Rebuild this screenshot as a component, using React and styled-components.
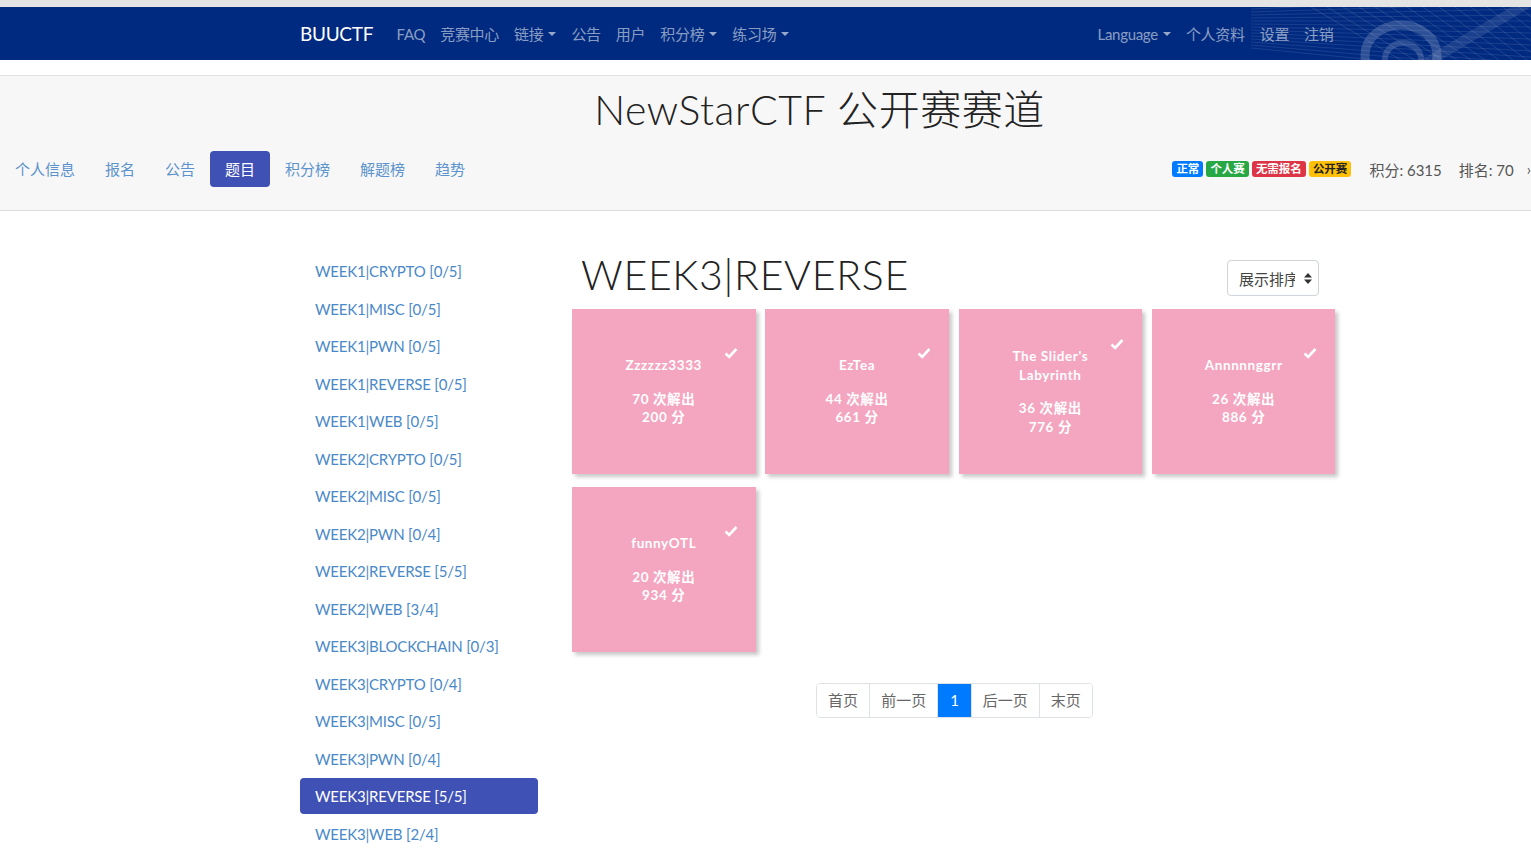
import React from "react";
import styled, { createGlobalStyle } from "styled-components";

const GlobalStyle = createGlobalStyle`
  html, body {
    margin: 0;
    padding: 0;
    background: #fff;
    overflow-x: hidden;
  }
  body {
    font-family: Lato, "Noto Sans CJK SC", sans-serif;
    font-size: 15px;
    color: #333;
  }
  a { text-decoration: none; }
`;

const TopStrip = styled.div`
  height: 7px;
  background: #e4e4e4;
`;

const NavBar = styled.nav`
  position: relative;
  height: 53px;
  background: #002a80;
  display: flex;
  align-items: center;
  padding: 0 190px 0 300px;
  overflow: hidden;
`;

const Pattern = styled.svg`
  position: absolute;
  right: 0;
  top: 0;
  width: 280px;
  height: 53px;
`;

const Brand = styled.a`
  color: #fff;
  font-size: 19px;
  letter-spacing: -0.3px;
  margin-right: 16px;
  position: relative;
`;

const NavGroup = styled.div`
  display: flex;
  align-items: center;
  position: relative;
  margin-left: ${(p) => (p.$right ? "auto" : "0")};
`;

const NavItem = styled.a`
  color: rgba(255, 255, 255, 0.55);
  font-size: 15px;
  padding: 0 7.5px;
  display: flex;
  align-items: center;
  letter-spacing: -0.3px;
  &::after {
    content: ${(p) => (p.$caret ? '""' : "none")};
    display: inline-block;
    margin-left: 5px;
    border-top: 4.5px solid rgba(255, 255, 255, 0.6);
    border-left: 4px solid transparent;
    border-right: 4px solid transparent;
  }
`;

const Gap = styled.div`
  height: 15px;
  background: #fff;
`;

const Header = styled.header`
  background: #f7f7f7;
  border-top: 1px solid #e2e2e2;
  border-bottom: 1px solid #dcdcdc;
  padding: 10px 0 23px;
  overflow: hidden;
`;

const Title = styled.h1`
  margin: 0;
  padding-left: 108px;
  text-align: center;
  font-family: Lato, "Noto Sans CJK SC", sans-serif;
  font-weight: 300;
  font-size: 41px;
  line-height: 48px;
  letter-spacing: 0.55px;
  color: #222;
`;

const SubRow = styled.div`
  display: flex;
  align-items: center;
  justify-content: space-between;
  margin-top: 17px;
  width: 1531px;
`;

const Pills = styled.div`
  display: flex;
`;

const Pill = styled.a`
  display: block;
  height: 36px;
  line-height: 36px;
  padding: 0 15px;
  border-radius: 4px;
  font-size: 15px;
  color: ${(p) => (p.$active ? "#fff" : "#5b93cc")};
  background: ${(p) => (p.$active ? "#3f51b5" : "transparent")};
`;

const Stats = styled.div`
  display: flex;
  align-items: center;
`;

const Badge = styled.span`
  display: inline-block;
  font-size: 11.5px;
  font-weight: 700;
  line-height: 16px;
  padding: 0 4px;
  border-radius: 3px;
  margin-right: 3px;
  color: ${(p) => (p.$dark ? "#222" : "#fff")};
  background: ${(p) => p.$bg};
`;

const Stat = styled.span`
  margin-left: ${(p) => p.$ml || "17px"};
  font-size: 15px;
  color: #555;
`;

const Main = styled.main`
  display: flex;
  align-items: flex-start;
  padding: 42px 0 0 300px;
`;

const Sidebar = styled.div`
  width: 238px;
  display: flex;
  flex-direction: column;
`;

const SideLink = styled.a`
  display: block;
  height: 37.5px;
  line-height: 37.5px;
  padding: 0 15px;
  border-radius: 4px;
  font-size: 15px;
  letter-spacing: -0.2px;
  color: ${(p) => (p.$active ? "#fff" : "#4a89c8")};
  background: ${(p) => (p.$active ? "#3f51b5" : "transparent")};
  ${(p) => p.$active && "height: 36px; line-height: 36px; margin: 0 0 1.5px;"}
`;

const Content = styled.section`
  margin-left: 34px;
  width: 765px;
  margin-top: -2px;
`;

const ContentHead = styled.div`
  display: flex;
  align-items: flex-start;
  justify-content: space-between;
  padding: 0 18px 0 9px;
  height: 58px;
`;

const CatTitle = styled.h2`
  margin: 0;
  font-family: Lato, sans-serif;
  font-weight: 300;
  font-size: 41px;
  line-height: 48px;
  letter-spacing: 0.7px;
  color: #222;
`;

const SortBox = styled.div`
  margin-top: 9px;
  width: 92px;
  height: 36px;
  box-sizing: border-box;
  border: 1px solid #ced4da;
  border-radius: 4px;
  display: flex;
  align-items: center;
  padding: 0 6px 0 11px;
  font-size: 15px;
  color: #444;
  white-space: nowrap;
  overflow: hidden;
  background: #fff;
`;

const SortText = styled.span`
  width: 56px;
  overflow: hidden;
`;

const Arrows = styled.svg`
  margin-left: auto;
  width: 8px;
  height: 11px;
`;

const Grid = styled.div`
  display: grid;
  grid-template-columns: repeat(4, 183.5px);
  column-gap: 9.8px;
  row-gap: 13px;
`;

const Card = styled.div`
  height: 165px;
  background: #f4a5c0;
  box-shadow: 3px 3px 4px rgba(0, 0, 0, 0.22);
  display: flex;
  align-items: center;
  justify-content: center;
`;

const CardBody = styled.div`
  position: relative;
  width: 100%;
  text-align: center;
  color: #fff;
  font-weight: 700;
  font-size: 13.5px;
  line-height: 18.5px;
  letter-spacing: 0.6px;
`;

const Name = styled.div`
  padding: 0 40px;
  margin-bottom: 15px;
`;

const Check = styled.svg`
  position: absolute;
  right: 18px;
  top: -9px;
  width: 14px;
  height: 12px;
`;

const Pager = styled.div`
  display: flex;
  justify-content: center;
  margin-top: 31px;
`;

const PageList = styled.div`
  display: flex;
  border: 1px solid #dee2e6;
  border-radius: 4px;
  overflow: hidden;
`;

const PageItem = styled.a`
  display: block;
  height: 33px;
  line-height: 33px;
  padding: 0 ${(p) => (p.$active ? "12px" : "11px")};
  font-size: 15px;
  color: ${(p) => (p.$active ? "#fff" : "#666")};
  background: ${(p) => (p.$active ? "#007bff" : "#fff")};
  border-left: ${(p) => (p.$first ? "none" : "1px solid #dee2e6")};
`;

const categories = [
  ["WEEK1|CRYPTO", "0/5"],
  ["WEEK1|MISC", "0/5"],
  ["WEEK1|PWN", "0/5"],
  ["WEEK1|REVERSE", "0/5"],
  ["WEEK1|WEB", "0/5"],
  ["WEEK2|CRYPTO", "0/5"],
  ["WEEK2|MISC", "0/5"],
  ["WEEK2|PWN", "0/4"],
  ["WEEK2|REVERSE", "5/5"],
  ["WEEK2|WEB", "3/4"],
  ["WEEK3|BLOCKCHAIN", "0/3"],
  ["WEEK3|CRYPTO", "0/4"],
  ["WEEK3|MISC", "0/5"],
  ["WEEK3|PWN", "0/4"],
  ["WEEK3|REVERSE", "5/5"],
  ["WEEK3|WEB", "2/4"],
];

const challenges = [
  { name: "Zzzzzz3333", solves: 70, score: 200 },
  { name: "EzTea", solves: 44, score: 661 },
  { name: "The Slider's Labyrinth", solves: 36, score: 776 },
  { name: "Annnnnggrr", solves: 26, score: 886 },
  { name: "funnyOTL", solves: 20, score: 934 },
];

function NavPattern() {
  const lines = [];
  for (let i = 0; i < 14; i++) {
    lines.push(
      <line key={"a" + i} x1={60 + i * 16} y1="0" x2={150 + i * 14} y2="53" stroke="rgba(255,255,255,0.12)" strokeWidth="1" />
    );
    lines.push(
      <line key={"b" + i} x1="0" y1={2 + i * 3} x2="280" y2={-10 + i * 6} stroke="rgba(255,255,255,0.1)" strokeWidth="1" />
    );
  }
  return (
    <Pattern viewBox="0 0 280 53" preserveAspectRatio="none">
      {lines}
      <ellipse cx="150" cy="48" rx="36" ry="30" fill="none" stroke="rgba(255,255,255,0.18)" strokeWidth="9" />
      <ellipse cx="152" cy="52" rx="18" ry="16" fill="none" stroke="rgba(255,255,255,0.16)" strokeWidth="6" />
      <path d="M170 53 L260 0 L280 0 L190 53 Z" fill="rgba(255,255,255,0.1)" />
    </Pattern>
  );
}

export default function App() {
  return (
    <>
      <GlobalStyle />
      <TopStrip />
      <NavBar>
        <NavPattern />
        <Brand>BUUCTF</Brand>
        <NavGroup>
          <NavItem>FAQ</NavItem>
          <NavItem>竞赛中心</NavItem>
          <NavItem $caret>链接</NavItem>
          <NavItem>公告</NavItem>
          <NavItem>用户</NavItem>
          <NavItem $caret>积分榜</NavItem>
          <NavItem $caret>练习场</NavItem>
        </NavGroup>
        <NavGroup $right>
          <NavItem $caret>Language</NavItem>
          <NavItem>个人资料</NavItem>
          <NavItem>设置</NavItem>
          <NavItem>注销</NavItem>
        </NavGroup>
      </NavBar>
      <Gap />
      <Header>
        <Title>NewStarCTF 公开赛赛道</Title>
        <SubRow>
          <Pills>
            <Pill>个人信息</Pill>
            <Pill>报名</Pill>
            <Pill>公告</Pill>
            <Pill $active>题目</Pill>
            <Pill>积分榜</Pill>
            <Pill>解题榜</Pill>
            <Pill>趋势</Pill>
          </Pills>
          <Stats>
            <Badge $bg="#007bff">正常</Badge>
            <Badge $bg="#28a745">个人赛</Badge>
            <Badge $bg="#dc3545">无需报名</Badge>
            <Badge $bg="#ffc107" $dark>公开赛</Badge>
            <Stat $ml="15px">积分: 6315</Stat>
            <Stat>排名: 70</Stat>
            <Stat $ml="13px">›</Stat>
          </Stats>
        </SubRow>
      </Header>
      <Main>
        <Sidebar>
          {categories.map(([c, n]) => (
            <SideLink key={c} $active={c === "WEEK3|REVERSE"}>
              {c} [{n}]
            </SideLink>
          ))}
        </Sidebar>
        <Content>
          <ContentHead>
            <CatTitle>WEEK3|REVERSE</CatTitle>
            <SortBox>
              <SortText>展示排序</SortText>
              <Arrows viewBox="0 0 8 11">
                <path d="M4 0 L8 4.5 L0 4.5 Z M0 6.5 L8 6.5 L4 11 Z" fill="#333" />
              </Arrows>
            </SortBox>
          </ContentHead>
          <Grid>
            {challenges.map((ch) => (
              <Card key={ch.name}>
                <CardBody>
                  <Check viewBox="0 0 14 12">
                    <path d="M1.5 6.5 L5.2 10 L12.5 2" fill="none" stroke="#fff" strokeWidth="2.6" />
                  </Check>
                  <Name>{ch.name}</Name>
                  <div>{ch.solves} 次解出</div>
                  <div>{ch.score} 分</div>
                </CardBody>
              </Card>
            ))}
          </Grid>
          <Pager>
            <PageList>
              <PageItem $first>首页</PageItem>
              <PageItem>前一页</PageItem>
              <PageItem $active>1</PageItem>
              <PageItem>后一页</PageItem>
              <PageItem>末页</PageItem>
            </PageList>
          </Pager>
        </Content>
      </Main>
    </>
  );
}
